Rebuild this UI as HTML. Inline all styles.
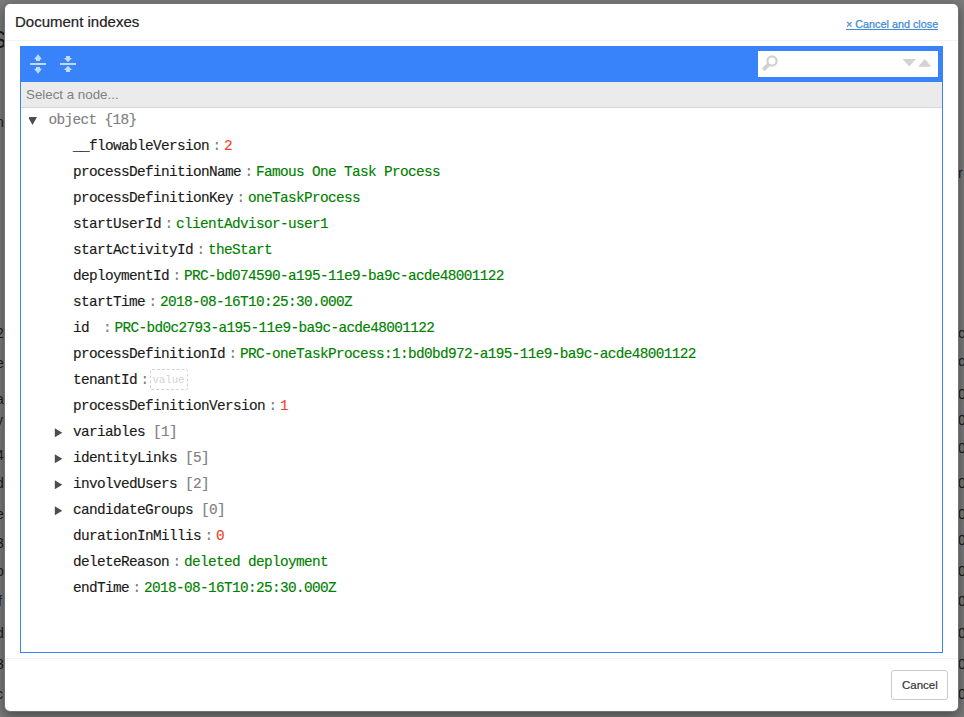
<!DOCTYPE html>
<html><head><meta charset="utf-8">
<style>
html,body{margin:0;padding:0;}
body{width:964px;height:717px;overflow:hidden;position:relative;background:#7a7a7a;font-family:"Liberation Sans",sans-serif;}
.bgc{position:absolute;color:#1a1a1a;font-size:14px;line-height:16px;font-family:"Liberation Sans",sans-serif;}
.modal{position:absolute;left:4px;top:3px;width:953px;height:707px;background:#fff;border-radius:6px;border:1px solid rgba(0,0,0,.55);box-shadow:0 4px 12px rgba(0,0,0,.4);}
.title{-webkit-text-stroke:0.2px currentColor;position:absolute;left:15px;top:12px;font-size:15px;line-height:20px;color:#222;white-space:nowrap;}
.close{-webkit-text-stroke:0.25px currentColor;position:absolute;left:846px;top:17px;font-size:10.8px;line-height:14px;color:#3f8ad4;text-decoration:underline;white-space:nowrap;}
.hsep{position:absolute;left:5px;top:40px;width:953px;height:1px;background:#f2f3f3;}
.fsep{position:absolute;left:5px;top:658px;width:953px;height:1px;background:#f2f3f3;}
.editor{position:absolute;left:20px;top:46px;width:921px;height:605px;border:1px solid #3883fa;background:#fff;overflow:hidden;}
.menu{position:absolute;left:0;top:0;width:921px;height:35px;background:#3883fa;}
.nav{position:absolute;left:0;top:35px;width:921px;height:25px;background:#ebebeb;border-bottom:1px solid #d7d7d7;}
.navtxt{position:absolute;left:5px;top:5px;font-size:13.333px;line-height:16px;color:#808080;font-family:"Liberation Sans",sans-serif;white-space:nowrap;}
.search{position:absolute;left:737px;top:4px;width:180px;height:26px;background:#fff;}
.tree{position:absolute;left:-20px;top:-46px;width:964px;height:717px;}
.t{position:absolute;-webkit-text-stroke:0.15px currentColor;font-family:"Liberation Mono",monospace;font-size:14.4px;letter-spacing:-0.64px;line-height:23.5px;height:26px;white-space:pre;color:#1a1a1a;padding-top:0;}
.t{top:0}
.ro{color:#808080;}
.sep{color:#808080;}
.num{color:#ee422e;}
.str{color:#008000;}
.empty{position:absolute;width:32px;height:15px;padding:2px;border:1px dashed #d3d3d3;border-radius:2px;font-family:"Liberation Mono",monospace;font-size:10.667px;line-height:17px;color:#d3d3d3;}
.ic{position:absolute;}
.tri-down{position:absolute;width:0;height:0;border-left:4.5px solid transparent;border-right:4.5px solid transparent;border-top:7.5px solid #4d4d4d;}
.tri-right{position:absolute;width:0;height:0;border-top:4.5px solid transparent;border-bottom:4.5px solid transparent;border-left:7.5px solid #4d4d4d;}
.btn{position:absolute;left:891px;top:670px;width:55px;height:28px;border:1px solid #ccc;border-radius:3px;background:#fff;}
.btntxt{-webkit-text-stroke:0.2px currentColor;position:absolute;left:10px;top:7px;font-size:11.5px;line-height:14px;color:#333;}
</style></head><body>
<div class="bgc" style="left:-9px;top:28px;font-size:23px;line-height:24px">S</div>
<div class="bgc" style="left:-4px;top:114px">n</div>
<div class="bgc" style="left:-4px;top:243px">l</div>
<div class="bgc" style="left:-4px;top:325px">2</div>
<div class="bgc" style="left:-4px;top:355px">e</div>
<div class="bgc" style="left:-4px;top:391px">a</div>
<div class="bgc" style="left:-4px;top:412px">y</div>
<div class="bgc" style="left:-4px;top:447px">4</div>
<div class="bgc" style="left:-4px;top:475px">d</div>
<div class="bgc" style="left:-4px;top:506px">e</div>
<div class="bgc" style="left:-4px;top:535px">3</div>
<div class="bgc" style="left:-4px;top:563px">o</div>
<div class="bgc" style="left:-2px;top:593px">f</div>
<div class="bgc" style="left:-4px;top:625px">d</div>
<div class="bgc" style="left:-4px;top:656px">3</div>
<div class="bgc" style="left:-4px;top:686px">c</div>
<div class="bgc" style="left:958px;top:165px">r</div>
<div class="bgc" style="left:958px;top:325px">c</div>
<div class="bgc" style="left:958px;top:353px">c</div>
<div class="bgc" style="left:958px;top:386px">0</div>
<div class="bgc" style="left:958px;top:412px">0</div>
<div class="bgc" style="left:958px;top:440px">0</div>
<div class="bgc" style="left:958px;top:475px">0</div>
<div class="bgc" style="left:958px;top:506px">0</div>
<div class="bgc" style="left:958px;top:532px">0</div>
<div class="bgc" style="left:958px;top:563px">0</div>
<div class="bgc" style="left:958px;top:593px">0</div>
<div class="bgc" style="left:958px;top:625px">0</div>
<div class="bgc" style="left:958px;top:656px">0</div>
<div class="bgc" style="left:958px;top:686px">0</div><div class="modal"></div>
<div class="title">Document indexes</div>
<div class="close">× Cancel and close</div>
<div class="hsep"></div>
<div class="editor">
  <div class="menu">
    <svg width="921" height="36" style="position:absolute;left:0;top:0">
      <g fill="#c3dafd">
        <rect x="9" y="16" width="16" height="2"/>
        <path d="M13 12.2 L17 7.2 L21 12.2 Z"/><rect x="15" y="12" width="4" height="2"/>
        <path d="M13 21.8 L17 26.8 L21 21.8 Z"/><rect x="15" y="20" width="4" height="2"/>
        <rect x="39" y="16" width="16" height="2"/>
        <path d="M43 11 L47 15.3 L51 11 Z"/><rect x="45" y="9" width="4" height="2"/>
        <path d="M43 23 L47 18.7 L51 23 Z"/><rect x="45" y="23" width="4" height="2"/>
      </g>
    </svg>
    <div class="search">
      <svg width="180" height="26" style="position:absolute;left:0;top:0">
        <circle cx="14" cy="10" r="4.6" fill="none" stroke="#d0d0d0" stroke-width="2.2"/>
        <path d="M11.2 12.8 L5.2 18.8" stroke="#d0d0d0" stroke-width="4"/>
        <path d="M144.5 8 L158 8 L151.2 15.4 Z" fill="#d3d3d3"/>
        <path d="M160 15.8 L173.5 15.8 L166.8 8 Z" fill="#d3d3d3"/>
      </svg>
    </div>
  </div>
  <div class="nav"><div class="navtxt">Select a node...</div></div>
  <div class="tree">
<svg class="ic" style="left:28px;top:116px" width="10" height="9"><path d="M-1 0 L8 0 L3.5 8 Z" fill="#4d4d4d"/></svg>
<div class="t ro" style="left:47.5px;top:108px">object {18}</div>
<div class="t fld" style="left:72px;top:134px">__flowableVersion</div>
<div class="t sep" style="left:211.5px;top:134px">:</div>
<div class="t num" style="left:223.0px;top:134px">2</div>
<div class="t fld" style="left:72px;top:160px">processDefinitionName</div>
<div class="t sep" style="left:243.5px;top:160px">:</div>
<div class="t str" style="left:255.0px;top:160px">Famous One Task Process</div>
<div class="t fld" style="left:72px;top:186px">processDefinitionKey</div>
<div class="t sep" style="left:235.5px;top:186px">:</div>
<div class="t str" style="left:247.0px;top:186px">oneTaskProcess</div>
<div class="t fld" style="left:72px;top:212px">startUserId</div>
<div class="t sep" style="left:163.5px;top:212px">:</div>
<div class="t str" style="left:175.0px;top:212px">clientAdvisor-user1</div>
<div class="t fld" style="left:72px;top:238px">startActivityId</div>
<div class="t sep" style="left:195.5px;top:238px">:</div>
<div class="t str" style="left:207.0px;top:238px">theStart</div>
<div class="t fld" style="left:72px;top:264px">deploymentId</div>
<div class="t sep" style="left:171.5px;top:264px">:</div>
<div class="t str" style="left:183.0px;top:264px">PRC-bd074590-a195-11e9-ba9c-acde48001122</div>
<div class="t fld" style="left:72px;top:290px">startTime</div>
<div class="t sep" style="left:147.5px;top:290px">:</div>
<div class="t str" style="left:159.0px;top:290px">2018-08-16T10:25:30.000Z</div>
<div class="t fld" style="left:72px;top:316px">id</div>
<div class="t sep" style="left:102.0px;top:316px">:</div>
<div class="t str" style="left:113.5px;top:316px">PRC-bd0c2793-a195-11e9-ba9c-acde48001122</div>
<div class="t fld" style="left:72px;top:342px">processDefinitionId</div>
<div class="t sep" style="left:227.5px;top:342px">:</div>
<div class="t str" style="left:239.0px;top:342px">PRC-oneTaskProcess:1:bd0bd972-a195-11e9-ba9c-acde48001122</div>
<div class="t fld" style="left:72px;top:368px">tenantId</div>
<div class="t sep" style="left:139.5px;top:368px">:</div>
<div class="empty" style="left:148.5px;top:368px">value</div>
<div class="t fld" style="left:72px;top:394px">processDefinitionVersion</div>
<div class="t sep" style="left:267.5px;top:394px">:</div>
<div class="t num" style="left:279.0px;top:394px">1</div>
<svg class="ic" style="left:53px;top:427px" width="9" height="10"><path d="M0.8 0.3 L8.3 4.8 L0.8 9.3 Z" fill="#4d4d4d"/></svg>
<div class="t fld" style="left:72px;top:420px">variables <span class="ro">[1]</span></div>
<svg class="ic" style="left:53px;top:453px" width="9" height="10"><path d="M0.8 0.3 L8.3 4.8 L0.8 9.3 Z" fill="#4d4d4d"/></svg>
<div class="t fld" style="left:72px;top:446px">identityLinks <span class="ro">[5]</span></div>
<svg class="ic" style="left:53px;top:479px" width="9" height="10"><path d="M0.8 0.3 L8.3 4.8 L0.8 9.3 Z" fill="#4d4d4d"/></svg>
<div class="t fld" style="left:72px;top:472px">involvedUsers <span class="ro">[2]</span></div>
<svg class="ic" style="left:53px;top:505px" width="9" height="10"><path d="M0.8 0.3 L8.3 4.8 L0.8 9.3 Z" fill="#4d4d4d"/></svg>
<div class="t fld" style="left:72px;top:498px">candidateGroups <span class="ro">[0]</span></div>
<div class="t fld" style="left:72px;top:524px">durationInMillis</div>
<div class="t sep" style="left:203.5px;top:524px">:</div>
<div class="t num" style="left:215.0px;top:524px">0</div>
<div class="t fld" style="left:72px;top:550px">deleteReason</div>
<div class="t sep" style="left:171.5px;top:550px">:</div>
<div class="t str" style="left:183.0px;top:550px">deleted deployment</div>
<div class="t fld" style="left:72px;top:576px">endTime</div>
<div class="t sep" style="left:131.5px;top:576px">:</div>
<div class="t str" style="left:143.0px;top:576px">2018-08-16T10:25:30.000Z</div>
  </div>
</div>
<div class="fsep"></div>
<div class="btn"><div class="btntxt">Cancel</div></div>
</body></html>
